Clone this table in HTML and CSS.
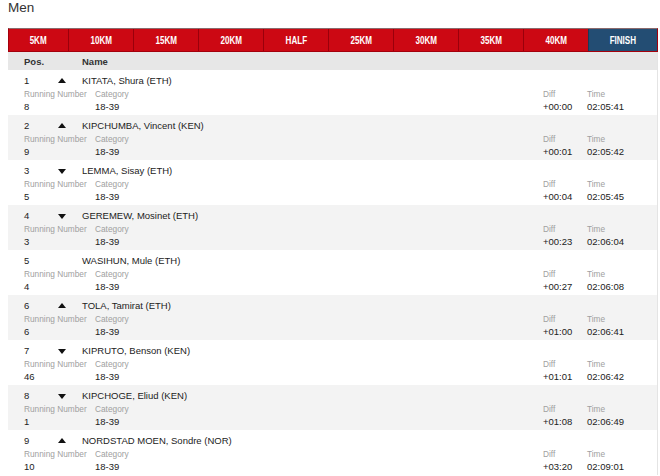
FILE: index.html
```html
<!DOCTYPE html>
<html>
<head>
<meta charset="utf-8">
<link rel="stylesheet" href="styles.css">
</head>
<body>
<div class="page">
  <h1 class="title">Men</h1>
  <div class="tabs">
    <div class="tab"><span class="tab-label">5KM</span></div>
    <div class="tab"><span class="tab-label">10KM</span></div>
    <div class="tab"><span class="tab-label">15KM</span></div>
    <div class="tab"><span class="tab-label">20KM</span></div>
    <div class="tab"><span class="tab-label">HALF</span></div>
    <div class="tab"><span class="tab-label">25KM</span></div>
    <div class="tab"><span class="tab-label">30KM</span></div>
    <div class="tab"><span class="tab-label">35KM</span></div>
    <div class="tab"><span class="tab-label">40KM</span></div>
    <div class="tab tab-active"><span class="tab-label">FINISH</span></div>
  </div>
  <div class="table">
    <div class="head">
      <span class="h-pos">Pos.</span>
      <span class="h-name">Name</span>
    </div>

    <div class="row">
      <div class="line1"><span class="pos">1</span><span class="arrow up"></span><span class="name">KITATA, Shura (ETH)</span></div>
      <div class="grid">
        <span class="lbl">Running Number</span><span class="lbl">Category</span><span class="lbl">Diff</span><span class="lbl">Time</span>
        <span class="val">8</span><span class="val">18-39</span><span class="val">+00:00</span><span class="val">02:05:41</span>
      </div>
    </div>

    <div class="row alt">
      <div class="line1"><span class="pos">2</span><span class="arrow up"></span><span class="name">KIPCHUMBA, Vincent (KEN)</span></div>
      <div class="grid">
        <span class="lbl">Running Number</span><span class="lbl">Category</span><span class="lbl">Diff</span><span class="lbl">Time</span>
        <span class="val">9</span><span class="val">18-39</span><span class="val">+00:01</span><span class="val">02:05:42</span>
      </div>
    </div>

    <div class="row">
      <div class="line1"><span class="pos">3</span><span class="arrow down"></span><span class="name">LEMMA, Sisay (ETH)</span></div>
      <div class="grid">
        <span class="lbl">Running Number</span><span class="lbl">Category</span><span class="lbl">Diff</span><span class="lbl">Time</span>
        <span class="val">5</span><span class="val">18-39</span><span class="val">+00:04</span><span class="val">02:05:45</span>
      </div>
    </div>

    <div class="row alt">
      <div class="line1"><span class="pos">4</span><span class="arrow down"></span><span class="name">GEREMEW, Mosinet (ETH)</span></div>
      <div class="grid">
        <span class="lbl">Running Number</span><span class="lbl">Category</span><span class="lbl">Diff</span><span class="lbl">Time</span>
        <span class="val">3</span><span class="val">18-39</span><span class="val">+00:23</span><span class="val">02:06:04</span>
      </div>
    </div>

    <div class="row">
      <div class="line1"><span class="pos">5</span><span class="arrow"></span><span class="name">WASIHUN, Mule (ETH)</span></div>
      <div class="grid">
        <span class="lbl">Running Number</span><span class="lbl">Category</span><span class="lbl">Diff</span><span class="lbl">Time</span>
        <span class="val">4</span><span class="val">18-39</span><span class="val">+00:27</span><span class="val">02:06:08</span>
      </div>
    </div>

    <div class="row alt">
      <div class="line1"><span class="pos">6</span><span class="arrow up"></span><span class="name">TOLA, Tamirat (ETH)</span></div>
      <div class="grid">
        <span class="lbl">Running Number</span><span class="lbl">Category</span><span class="lbl">Diff</span><span class="lbl">Time</span>
        <span class="val">6</span><span class="val">18-39</span><span class="val">+01:00</span><span class="val">02:06:41</span>
      </div>
    </div>

    <div class="row">
      <div class="line1"><span class="pos">7</span><span class="arrow down"></span><span class="name">KIPRUTO, Benson (KEN)</span></div>
      <div class="grid">
        <span class="lbl">Running Number</span><span class="lbl">Category</span><span class="lbl">Diff</span><span class="lbl">Time</span>
        <span class="val">46</span><span class="val">18-39</span><span class="val">+01:01</span><span class="val">02:06:42</span>
      </div>
    </div>

    <div class="row alt">
      <div class="line1"><span class="pos">8</span><span class="arrow down"></span><span class="name">KIPCHOGE, Eliud (KEN)</span></div>
      <div class="grid">
        <span class="lbl">Running Number</span><span class="lbl">Category</span><span class="lbl">Diff</span><span class="lbl">Time</span>
        <span class="val">1</span><span class="val">18-39</span><span class="val">+01:08</span><span class="val">02:06:49</span>
      </div>
    </div>

    <div class="row">
      <div class="line1"><span class="pos">9</span><span class="arrow up"></span><span class="name">NORDSTAD MOEN, Sondre (NOR)</span></div>
      <div class="grid">
        <span class="lbl">Running Number</span><span class="lbl">Category</span><span class="lbl">Diff</span><span class="lbl">Time</span>
        <span class="val">10</span><span class="val">18-39</span><span class="val">+03:20</span><span class="val">02:09:01</span>
      </div>
    </div>
  </div>
</div>
</body>
</html>
```

FILE: styles.css
```css
html, body {
  margin: 0;
  padding: 0;
  background: #ffffff;
}
.page {
  padding: 0 2px 0 8px;
  font-family: "Liberation Sans", Arial, sans-serif;
  color: #333333;
}
.title {
  margin: 0 0 13px 0;
  padding-top: 1px;
  font-size: 13.5px;
  line-height: 14px;
  font-weight: normal;
  color: #333333;
}
.tabs {
  display: flex;
  height: 24px;
  box-sizing: border-box;
  border: 1px solid #a4000c;
  border-top-color: #8a6a6c;
  background: #cc0813;
}
.tab {
  flex: 1 1 0;
  display: flex;
  align-items: center;
  justify-content: center;
  color: #ffffff;
  border-left: 1px solid #9a000b;
}
.tab:first-child {
  flex-grow: 0.92;
  border-left: none;
}
.tab-label {
  display: inline-block;
  font-family: "Liberation Sans", Arial, sans-serif;
  font-weight: bold;
  font-size: 11.5px;
  transform: scaleX(0.7);
}
.tab-active {
  flex-grow: 1.06;
  background: #234d73;
  border-left-color: #1a3a58;
}
.table {
  border-right: 1px solid #e4e4e4;
}
.head {
  display: flex;
  height: 18px;
  align-items: center;
  background: #e7e7e7;
  padding-left: 16px;
  font-size: 9.5px;
  font-weight: bold;
  color: #333333;
}
.h-pos {
  width: 58px;
}
.row {
  height: 45px;
  box-sizing: border-box;
  padding: 4px 0 2px 16px;
  background: #ffffff;
  font-size: 9.5px;
}
.row.alt {
  background: #f3f3f3;
}
.line1 {
  display: flex;
  align-items: center;
  height: 13px;
  color: #222222;
}
.pos {
  width: 33px;
}
.arrow {
  width: 25px;
  height: 13px;
  position: relative;
}
.arrow.up::before,
.arrow.down::before {
  content: "";
  position: absolute;
  left: 1px;
  top: 4px;
  border-left: 4px solid transparent;
  border-right: 4px solid transparent;
}
.arrow.up::before {
  border-bottom: 5px solid #111111;
}
.arrow.down::before {
  top: 5px;
  border-top: 5px solid #111111;
}
.grid {
  display: grid;
  grid-template-columns: 71px 1fr 44px 70px;
  grid-auto-rows: 13px;
  align-items: center;
}
.lbl {
  font-size: 8.3px;
  color: #a0a0a0;
}
.val {
  font-size: 9.5px;
  color: #222222;
}
```
